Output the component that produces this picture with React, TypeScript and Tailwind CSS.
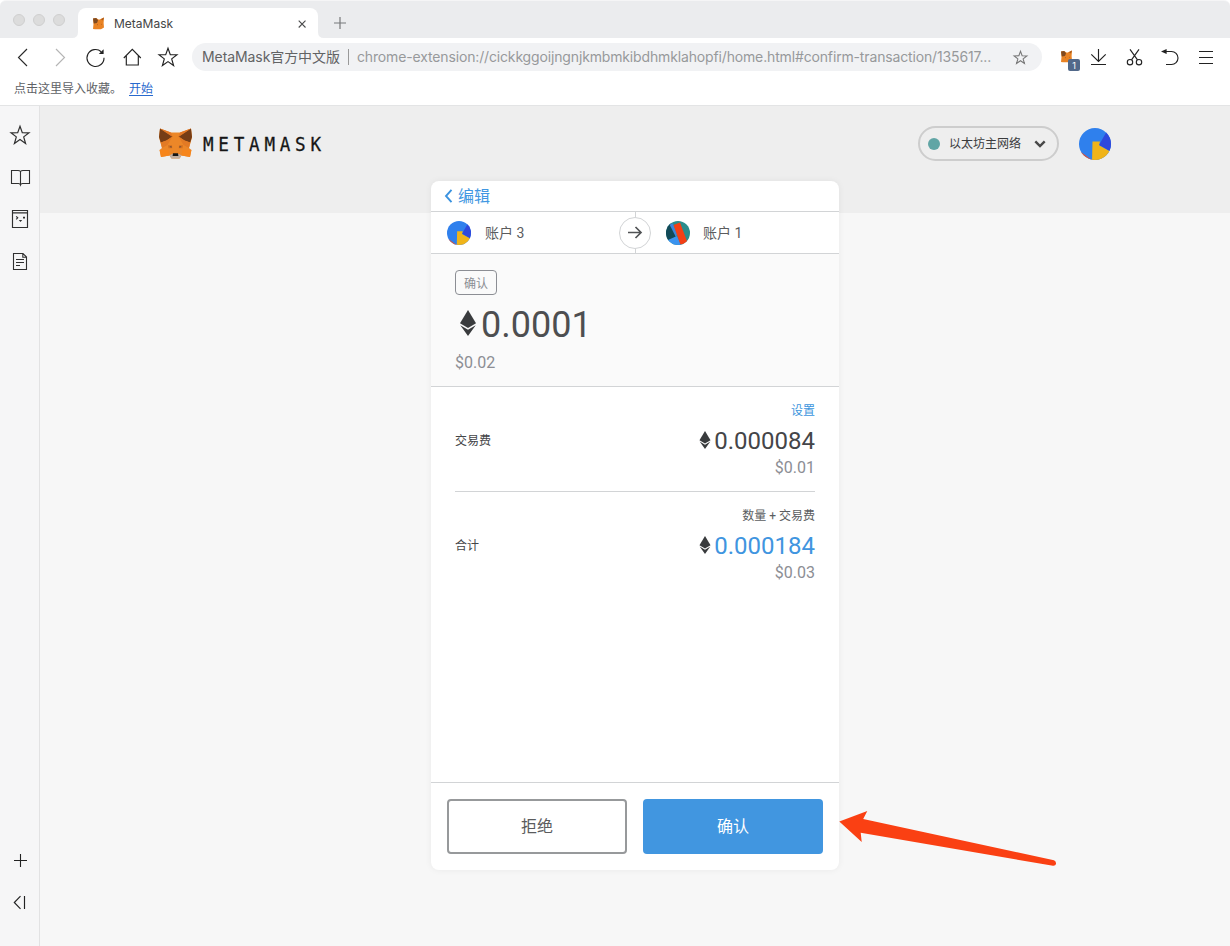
import React from "react";

type BoxProps = { w: number; h: number; className?: string; children: React.ReactNode };

function Draw({ w, h, className = "", children }: BoxProps) {
  return (
    <svg width={w} height={h} viewBox={`0 0 ${w} ${h}`} fill="none" className={`block shrink-0 ${className}`}>
      {children}
    </svg>
  );
}

const STAR = "M12 3.2 L14.3 9.6 L21 9.8 L15.7 13.9 L17.6 20.5 L12 16.6 L6.4 20.5 L8.3 13.9 L3 9.8 L9.7 9.6 Z";

function Star({ size, stroke, width }: { size: number; stroke: string; width: number }) {
  return (
    <svg width={size} height={size} viewBox="0 0 24 24" fill="none" className="block shrink-0">
      <path d={STAR} stroke={stroke} strokeWidth={width} />
    </svg>
  );
}

function Fox({ className }: { className: string }) {
  return (
    <svg viewBox="0 0 33 31" className={className} preserveAspectRatio="none">
      <path d="M1 0.5 L12 4.5 L21 4.5 L32 0.5 L33 9 L31.5 15 L30 20 L32.5 22 L31 29 L22.5 27.5 L20.5 30.5 H12.5 L10.5 27.5 L2 29 L0.5 22 L3 20 L1.5 15 L0 9 Z" fill="#ec8728" />
      <path d="M1 0.5 L13.5 8.5 L7.5 12.5 L1.8 14.5 L0 9 Z M32 0.5 L19.5 8.5 L25.5 12.5 L31.2 14.5 L33 9 Z" fill="#763d16" />
      <path d="M1 0.5 L12 4.5 L13.5 9 Z M32 0.5 L21 4.5 L19.5 9 Z" fill="#e17726" />
      <path d="M13.5 8.5 L8.5 17 L3 20 L1.8 14.5 L7.5 12.5 Z M19.5 8.5 L24.5 17 L30 20 L31.2 14.5 L25.5 12.5 Z" fill="#e27a25" />
      <path d="M9 17.2 L13 17.2 L13.2 20.2 L9.5 20.2 Z M24 17.2 L20 17.2 L19.8 20.2 L23.5 20.2 Z" fill="#d5701f" />
      <path d="M10.5 18.4 L12.8 18.6 L12.2 19.8 Z M22.5 18.4 L20.2 18.6 L20.8 19.8 Z" fill="#3f4148" />
      <path d="M0.7 22 H9.5 L10.5 27.5 L2 29 Z M32.3 22 H23.5 L22.5 27.5 L31 29 Z" fill="#f6851b" />
      <path d="M10.5 27.5 L13 26 H20 L22.5 27.5 L20.5 30.5 H12.5 Z" fill="#c0ad9e" />
      <path d="M14 25.2 H19 L19.4 28 H13.6 Z" fill="#161616" />
    </svg>
  );
}

function SmallFox() {
  return (
    <Draw w={13} h={13}>
      <path d="M1 1.5 L4 1 L7 2.8 L12 0.5 L11.6 6 L12 10.5 L9 12.3 H3 L1 12 L1.5 7 Z" fill="#e98324" />
      <path d="M1 1.5 L4.2 1 L6 3.2 L5 6 L1.8 6.5 Z" fill="#7f4a20" />
      <path d="M12 0.5 L8.8 2.2 L11 3.4 Z M5 7 L6 7.6 L5.2 8.4 Z M9.8 6.5 L9 7.4 L9.8 8 Z" fill="#a85a1c" />
    </Draw>
  );
}

function BlueIdenticon({ className }: { className: string }) {
  return (
    <svg viewBox="0 0 32 32" className={`block overflow-hidden rounded-full ${className}`}>
      <rect width="32" height="32" fill="#2f80ed" />
      <path d="M28 3 L20 17 L34 25 V0 Z" fill="#2f49dc" />
      <path d="M13.5 13.5 L21 13.5 L20 17.3 L32 24 V34 H13 Z" fill="#f0b419" />
      <path d="M2 24 L13 32 H2 Z" fill="#d9533c" />
    </svg>
  );
}

function TealIdenticon() {
  return (
    <svg viewBox="0 0 24 24" className="block size-6 overflow-hidden rounded-full">
      <rect width="24" height="24" fill="#2a8c8c" />
      <path d="M0 0 H4 L10 16 L3 19 L0 20 Z" fill="#124a58" />
      <path d="M2 19 L11 15 L16 26 H0 Z" fill="#3b93ef" />
      <path d="M3.5 3.5 L7 2.5 L11 13 L10 16.2 Z" fill="#3b86dd" />
      <path d="M7.5 4 L14 1.5 L21.5 21.5 L14.5 23.8 Z" fill="#f23f16" />
    </svg>
  );
}

function Eth({ className }: { className: string }) {
  return (
    <svg viewBox="0 0 16 26" className={`block shrink-0 ${className}`} fill="#393b3d">
      <path d="M8 0 L16 13.2 L8 17.9 L0 13.2 Z" />
      <path d="M0.3 15.2 L8 19.8 L15.7 15.2 L8 26 Z" />
    </svg>
  );
}

function TabStrip() {
  return (
    <div className="flex h-[38px] rounded-t-[6px] border-t border-[#f5f5f6] bg-[#ebecee] pl-[13px]">
      <div className="flex gap-2 pt-[13px]">
        {[0, 1, 2].map((i) => (
          <span key={i} className="size-3 rounded-full border border-[#cfcfcf] bg-[#dcdcdc]" />
        ))}
      </div>
      <svg width="6" height="6" viewBox="0 0 6 6" className="ml-[7px] self-end">
        <path d="M6 0 V6 H0 Q6 6 6 0 Z" fill="#fff" />
      </svg>
      <div className="mt-[7px] flex w-[240px] items-center rounded-t-lg bg-white pt-px pr-[11px] pl-[14px]">
        <SmallFox />
        <span className="ml-[9px] flex-1 text-[12px] text-[#444546]">MetaMask</span>
        <Draw w={10} h={10}>
          <path d="M1.7 1.7 L8.5 8.5 M8.5 1.7 L1.7 8.5" stroke="#4b4c4d" strokeWidth="1.1" />
        </Draw>
      </div>
      <svg width="6" height="6" viewBox="0 0 6 6" className="self-end">
        <path d="M0 0 V6 H6 Q0 6 0 0 Z" fill="#fff" />
      </svg>
      <Draw w={12} h={12} className="mt-[16px] ml-[10px]">
        <path d="M6 0 V12 M0 6 H12" stroke="#77787a" strokeWidth="1.2" />
      </Draw>
    </div>
  );
}

function Toolbar() {
  return (
    <div className="flex h-[38px] items-center bg-white pl-[11px]">
      <Draw w={24} h={24}>
        <path d="M16 4 L7.5 12.5 L16 21" stroke="#2a2a2a" strokeWidth="1.15" />
      </Draw>
      <Draw w={24} h={24} className="ml-[13px]">
        <path d="M8 4 L16.5 12.5 L8 21" stroke="#b5b5b5" strokeWidth="1.15" />
      </Draw>
      <Draw w={24} h={24} className="ml-[11px]">
        <path d="M18.2 6.7 A8.5 8.5 0 1 0 21 12.7" stroke="#222" strokeWidth="1.15" />
        <path d="M20.6 4.2 V9 H15.8 Z" fill="#222" />
      </Draw>
      <Draw w={24} h={24} className="ml-[13px]">
        <path d="M3.8 13 L12.3 4.4 L20.8 13 M6.3 10.8 V20 H18.3 V10.8" stroke="#222" strokeWidth="1.15" />
      </Draw>
      <div className="ml-3">
        <Star size={24} stroke="#222" width={1.15} />
      </div>
      <div className="ml-3 flex h-7 w-[850px] items-center rounded-full bg-[#f1f2f4] pr-[13px] pl-[10px]">
        <span className="w-[138px] pb-px text-[14px] tracking-[-0.08px] whitespace-nowrap text-[#626364]">MetaMask官方中文版</span>
        <span className="ml-2 h-4 w-px bg-[#999]" />
        <span className="ml-2 flex-1 pb-px text-[14px] tracking-[-0.15px] whitespace-nowrap text-[#97999b]">
          chrome-extension://cickkggoijngnjkmbmkibdhmklahopfi/home.html#confirm-transaction/135617...
        </span>
        <Star size={17} stroke="#777" width={1.5} />
      </div>
      <div className="relative ml-[18px] h-5 w-5 pt-[3px]">
        <SmallFox />
        <span className="absolute top-[12px] left-2 flex h-3 w-3 items-center justify-center rounded-[2px] bg-[#52698a] text-[9px] leading-none text-white">1</span>
      </div>
      <Draw w={24} h={24} className="ml-[7px]">
        <path d="M11.5 4 V16.5 M4.3 9.3 L11.5 16.5 L18.7 9.3 M4 19.5 H19" stroke="#222" strokeWidth="1.15" />
      </Draw>
      <Draw w={24} h={24} className="ml-[11px]">
        <path d="M8 4.3 L15.5 14.8 M17 4.3 L9.5 14.8" stroke="#222" strokeWidth="1.15" />
        <circle cx="8" cy="17.2" r="2.7" stroke="#222" strokeWidth="1.15" />
        <circle cx="17" cy="17.2" r="2.7" stroke="#222" strokeWidth="1.15" />
      </Draw>
      <Draw w={24} h={24} className="ml-3">
        <path d="M5.5 6.5 H13.5 A6.5 6.5 0 0 1 13.5 19.5 H8" stroke="#222" strokeWidth="1.15" />
        <path d="M3 6.5 L8.6 4 V9 Z" fill="#222" />
      </Draw>
      <Draw w={24} h={24} className="ml-3">
        <path d="M5 6.5 H19 M5 12.5 H19 M5 18.5 H19" stroke="#222" strokeWidth="1.1" />
      </Draw>
    </div>
  );
}

function Sidebar() {
  return (
    <aside className="flex w-10 shrink-0 flex-col border-r border-[#e2e2e3] bg-[#f6f6f7] pt-[17px] pl-2">
      <Star size={24} stroke="#303030" width={1.2} />
      <Draw w={24} h={24} className="mt-[19px]">
        <path d="M12.5 5.5 Q11.7 4.5 10 4.5 H3.5 V17.5 H10.5 Q12 17.5 12.5 19 Q13 17.5 14.5 17.5 H21.5 V4.5 H15 Q13.3 4.5 12.5 5.5 Z M12.5 5.5 V19" stroke="#303030" strokeWidth="1.1" />
      </Draw>
      <Draw w={24} h={24} className="mt-[17px]">
        <path d="M4.5 3.5 H19.5 V20.5 H4.5 Z M4.5 5.8 H19.5" stroke="#303030" strokeWidth="1.15" />
        <path d="M8.2 9.3 L9.7 10.8 L8.2 12.3" stroke="#303030" strokeWidth="1.2" />
        <path d="M15 9.8 h2 v1.8 h-2 z M10.8 13 H14.2 L12.5 15 Z" fill="#303030" />
      </Draw>
      <Draw w={24} h={24} className="mt-[19px]">
        <path d="M5.5 3.5 H15 L18.5 7 V19.5 H5.5 Z M14.8 3.8 V7.2 H18.3 M8 9.5 H16 M8 12.5 H16 M8 15.5 H12" stroke="#303030" strokeWidth="1.1" />
      </Draw>
      <div className="grow" />
      <Draw w={24} h={24} className="mb-[18px]">
        <path d="M12.5 6 V19 M6 12.5 H19" stroke="#222" strokeWidth="1.1" />
      </Draw>
      <Draw w={24} h={24} className="mb-[32px]">
        <path d="M12.5 6.2 L6.3 12.5 L12.5 18.8 M16.5 6 V19" stroke="#222" strokeWidth="1.15" />
      </Draw>
    </aside>
  );
}

function ConfirmCard() {
  return (
    <section className="flex h-[689px] w-[408px] flex-col overflow-hidden rounded-lg bg-white shadow-[0_0_7px_rgba(0,0,0,0.06)]">
      <div className="flex h-[31px] shrink-0 items-center border-b border-[#d2d4d6] pl-[13px]">
        <Draw w={10} h={16}>
          <path d="M7.5 1.8 L2 8 L7.5 14.2" stroke="#3b93e0" strokeWidth="1.9" />
        </Draw>
        <span className="ml-1 pt-0.5 text-[16px] leading-none text-[#4197e2]">编辑</span>
      </div>
      <div className="grid h-[42px] shrink-0 grid-cols-[205px_203px] border-b border-[#d2d4d6] text-[14px] text-[#5b5c5e]">
        <div className="flex items-center gap-[14px] border-r border-[#d2d4d6] pl-4">
          <BlueIdenticon className="size-6" />
          <span className="pt-0.5">账户 3</span>
          <span className="relative -mr-4 ml-auto flex size-8 items-center justify-center rounded-full border border-[#d2d4d6] bg-white">
            <Draw w={16} h={14}>
              <path d="M1 6.5 H14 M8.5 1 L14 6.5 L8.5 12" stroke="#515355" strokeWidth="1.7" />
            </Draw>
          </span>
        </div>
        <div className="flex items-center gap-[13px] pl-[30px]">
          <TealIdenticon />
          <span className="pt-0.5">账户 1</span>
        </div>
      </div>
      <div className="flex h-[133px] shrink-0 flex-col items-start border-b border-[#d2d4d6] bg-[#fafafa] pt-4 pl-6">
        <span className="flex h-[25px] w-[42px] items-center justify-center rounded-[4px] border border-[#8c8e94] pt-0.5 text-[12px] text-[#8c8e94]">确认</span>
        <div className="mt-1.5 flex h-11 items-center pl-[5px]">
          <Eth className="h-[26px] w-4" />
          <span className="ml-[5px] pt-[3px] text-[36px] leading-none text-[#4d4e50]">0.0001</span>
        </div>
        <span className="mt-[7px] text-[16px] leading-[22px] text-[#8c8e94]">$0.02</span>
      </div>
      <div className="flex grow flex-col px-6">
        <FeeRow label="交易费" note="设置" noteClass="text-[#3c95dd]" amount="0.000084" amountClass="text-[#444548]" fiat="$0.01" className="h-[105px] border-b border-[#d2d4d6]" />
        <FeeRow label="合计" note="数量 + 交易费" noteClass="text-[#5b5d60]" amount="0.000184" amountClass="text-[#4095df]" fiat="$0.03" className="h-[105px]" />
      </div>
      <div className="flex h-[88px] shrink-0 gap-4 border-t border-[#d2d4d6] px-4 pt-4 text-[16px]">
        <button className="h-[55px] w-[180px] rounded-[4px] border-2 border-[#97999b] text-[#5b5c5e]">拒绝</button>
        <button className="h-[55px] w-[180px] rounded-[4px] bg-[#4196e0] text-white">确认</button>
      </div>
    </section>
  );
}

type FeeProps = {
  label: string;
  note: string;
  noteClass: string;
  amount: string;
  amountClass: string;
  fiat: string;
  className: string;
};

function FeeRow({ label, note, noteClass, amount, amountClass, fiat, className }: FeeProps) {
  return (
    <div className={`flex items-start justify-between pt-[15px] ${className}`}>
      <span className="mt-[30px] text-[12px] leading-[18px] text-[#444548]">{label}</span>
      <div className="flex flex-col items-end">
        <span className={`text-[12px] leading-[18px] ${noteClass}`}>{note}</span>
        <div className="mt-[6px] flex h-[30px] items-center">
          <Eth className="mb-0.5 h-[18px] w-3" />
          <span className={`ml-[3px] text-[24px] leading-[30px] ${amountClass}`}>{amount}</span>
        </div>
        <span className="mt-px text-[16px] leading-[22px] text-[#8c8e94]">{fiat}</span>
      </div>
    </div>
  );
}

export default function App() {
  return (
    <div className="flex h-[946px] w-[1230px] flex-col overflow-hidden bg-white font-['Inter','Noto_Sans_CJK_SC',sans-serif]">
      <TabStrip />
      <Toolbar />
      <div className="flex h-[30px] items-center border-b border-[#e3e4e5] pb-1 pl-[14px] text-[12px]">
        <span className="text-[#606266]">点击这里导入收藏。</span>
        <span className="ml-[7px] text-[#2869cd] underline underline-offset-2">开始</span>
      </div>
      <div className="flex grow">
        <Sidebar />
        <main className="relative flex grow flex-col bg-[#f7f7f7] font-['Roboto','Noto_Sans_CJK_SC',sans-serif]">
          <header className="flex h-[107px] shrink-0 items-start bg-[#eee] pt-5 pr-[119px] pl-[119px]">
            <Fox className="mt-[2px] h-[31px] w-[33px]" />
            <span className="mt-[4px] ml-[11px] origin-left scale-x-[0.88] font-['DejaVu_Sans_Mono',monospace] text-[20px] leading-7 tracking-[5.4px] text-[#161616] [-webkit-text-stroke:0.3px_#161616]">METAMASK</span>
            <div className="ml-auto flex h-[35px] w-[141px] items-center rounded-full border-2 border-[#cdcdcd] pl-2">
              <span className="size-3 rounded-full bg-[#61a5a5]" />
              <span className="ml-[9px] pt-px text-[12px] text-[#3a3b3d]">以太坊主网络</span>
              <Draw w={12} h={8} className="ml-[13px]">
                <path d="M1.3 1.3 L6 6 L10.7 1.3" stroke="#484848" strokeWidth="2.4" />
              </Draw>
            </div>
            <BlueIdenticon className="mt-[2px] ml-5 size-8" />
          </header>
          <div className="-mt-8 pl-[391px]">
            <ConfirmCard />
          </div>
          <svg width="220" height="60" viewBox="0 0 220 60" className="absolute top-[704px] left-[798px]">
            <path d="M1.3 11.5 L29.3 1 L25.2 9 L216 50.2 Q218.3 51 218 54 Q217.5 56 215 55.8 L22.7 22.7 L23.7 32 Z" fill="#fa4013" />
          </svg>
        </main>
      </div>
    </div>
  );
}
